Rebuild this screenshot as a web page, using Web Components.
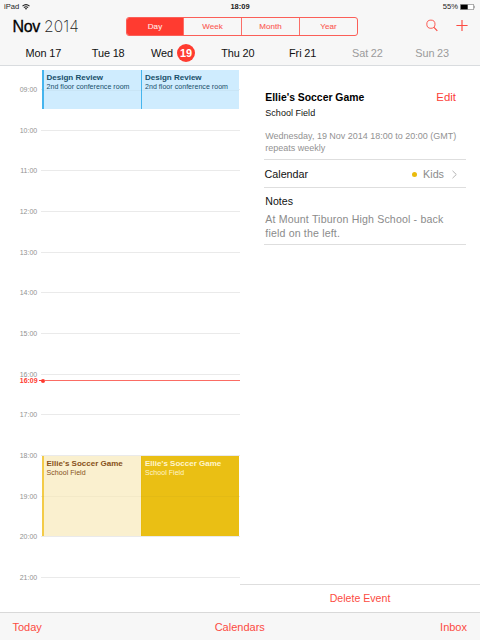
<!DOCTYPE html>
<html lang="en">
<head>
<meta charset="utf-8">
<title>Calendar</title>
<style>
html,body{margin:0;padding:0}
body{width:480px;height:640px;overflow:hidden;background:#fff;color:#111;font-family:"Liberation Sans",Arial,sans-serif}
</style>
</head>
<body>
<calendar-app></calendar-app>
<script>
const define = (name, html, init) => customElements.define(name, class extends HTMLElement {
  constructor() {
    super();
    this.attachShadow({ mode: "open" }).innerHTML = "<style>*{box-sizing:border-box}:host{box-sizing:border-box;white-space:nowrap}</style>" + html;
  }
  connectedCallback() { if (init) init(this, this.shadowRoot); }
});

define("status-bar", `<style>
:host{display:grid;grid-template-columns:1fr 1fr 1fr;align-items:center;height:13px;padding:0 4px 0 4px;font-size:7.6px;line-height:13px;color:#222}
.l,.r{display:flex;align-items:center}.l{gap:3px}.r{justify-content:flex-end;gap:2px}.c{text-align:center;font-weight:bold;font-size:7.5px}
svg{display:block}
</style>
<div class="l"><span>iPad</span><svg width="8" height="6" viewBox="0 0 8 6" fill="none" stroke="#222" stroke-width="1.1"><path d="M.5 2.2Q4-1 7.5 2.2M1.9 3.7Q4 1.8 6.1 3.7"/><path d="M2.8 4.5Q4 3.5 5.2 4.5L4 5.8Z" fill="#222" stroke="none"/></svg></div>
<div class="c">18:09</div>
<div class="r"><span>55%</span><svg width="16" height="6" viewBox="0 0 16 6"><rect x=".3" y=".3" width="13.4" height="5.4" rx=".8" fill="#fff" stroke="#555" stroke-width=".6"/><rect x=".7" y=".7" width="7" height="4.6" fill="#000"/><path d="M14.4 2Q15.6 3 14.4 4Z" fill="#444"/></svg></div>`);

define("segmented-control", `<style>
:host{display:grid;grid-template-columns:56px 58px 58px 58px;width:232px;height:19px;border:1px solid #fb5f58;border-radius:3px;overflow:hidden}
</style><slot></slot>`);
define("segment-item", `<style>
:host{display:flex;align-items:center;justify-content:center;font-size:8px;color:#fb5a52;border-left:1px solid #fb6f68;letter-spacing:.1px;-webkit-text-stroke:.1px}
:host(:first-child){border-left:0}
:host([selected]){background:#ff3b30;color:#ffe9e7}
</style><slot></slot>`);

define("nav-bar", `<style>
:host{display:grid;grid-template-columns:126px 232px 1fr;height:27px;padding-top:4px;align-items:start}
.title{display:flex;gap:4px;padding-left:12.5px;font-size:16px;line-height:19px;color:#000}
b{font-weight:400;-webkit-text-stroke:.3px #000;letter-spacing:-.35px}
i{font:200 15.6px/19px Inter,"Liberation Sans",sans-serif;color:#222;letter-spacing:.1px}
.icons{display:flex;justify-content:flex-end;gap:18px;padding:2px 12px 0 0}
svg{fill:none;stroke:#fc4b42;display:block}
</style>
<div class="title"><b>Nov</b><i>2014</i></div>
<segmented-control><segment-item selected>Day</segment-item><segment-item>Week</segment-item><segment-item>Month</segment-item><segment-item>Year</segment-item></segmented-control>
<div class="icons">
<svg width="12" height="13" viewBox="0 0 12 13"><circle cx="4.9" cy="5.2" r="4.1" stroke-width=".9"/><path d="M8 8.4L11.3 11.8" stroke-width="1.2"/></svg>
<svg width="12" height="13" viewBox="0 0 12 13"><path d="M6 .9V12M.4 6.5H11.6" stroke-width="1.15"/></svg></div>`);

define("week-day", `<style>
:host{display:flex;align-items:center;justify-content:center;gap:2.7px;font-size:10.9px;letter-spacing:-.07px;color:#111}
:host([weekend]){color:#9b9b9b}
.n{display:inline-flex;align-items:center;justify-content:center}
:host([selected]) .n{width:18px;height:18px;border-radius:50%;background:#ff3b30;color:#fff;font-weight:bold}
:host([selected]){gap:4px}
</style><slot></slot><span class="n"></span>`, (el, root) => { root.querySelector(".n").textContent = el.getAttribute("num"); });

define("week-strip", `<style>:host{display:grid;grid-template-columns:repeat(7,64.8px);height:25px;padding:1px 0 0 11px}</style>
<week-day num="17">Mon</week-day><week-day num="18">Tue</week-day><week-day num="19" selected>Wed</week-day><week-day num="20">Thu</week-day><week-day num="21">Fri</week-day><week-day num="22" weekend>Sat</week-day><week-day num="23" weekend>Sun</week-day>`);

define("hour-row", `<style>
:host{display:flex;align-items:center;height:40.65px;gap:4px}
.t{width:37.3px;text-align:right;font-size:7px;color:#929292;letter-spacing:.03px}
.line{flex:1;height:1px;background:#eaeaea}
</style><span class="t"><slot></slot></span><span class="line"></span>`);

define("day-event", `<style>
:host{position:absolute;display:block;width:99px;padding:3px 0 0 4.5px;background:var(--fill);border-left:0;color:var(--ink)}
:host::before{content:"";position:absolute;left:0;top:0;bottom:0;width:1.5px;background:var(--bar)}
.h{font-weight:bold;font-size:8.02px;line-height:9px}
.p{font-size:7.05px;line-height:9.5px;letter-spacing:.03px}
.mid{position:absolute;left:0;right:0;height:1px;top:var(--mid);background:rgba(80,80,40,.04)}
</style><span class="mid"></span><div class="h"><slot></slot></div><div class="p"><slot name="place"></slot></div>`);

define("now-marker", `<style>
:host{position:absolute;left:0;top:310px;width:240px;height:9px;display:flex;align-items:center;color:#ff3b30}
.t{width:37.5px;text-align:right;font-size:7px;font-weight:bold;letter-spacing:-.05px}
.dash{width:3px;height:1px;background:#ff3b30;margin-left:1px}
.dot{width:4px;height:4px;border-radius:50%;background:#ff3b30;margin-left:-.5px}
.line{flex:1;height:1px;background:#fb6c64}
</style><span class="t"><slot></slot></span><span class="dash"></span><span class="dot"></span><span class="line"></span>`);

define("day-timeline", `<style>
:host{display:block;position:relative;width:240px;height:546px;overflow:hidden;padding-top:3.4px}
.blue{--fill:#cfecfe;--bar:#45b5ee;--ink:#174f6b;--mid:19.5px;top:4px;height:39px}
.gold{top:390px;height:80px;--mid:40px}
.pale{--fill:#faf0cf;--bar:#f3cb48;--ink:#875019}
.full{--fill:#eabf14;--bar:#e8bb10;--ink:#fff5cc}
.a{left:42px}.b{left:140.5px;width:98.5px}
</style>
<div class="hours"></div>
<day-event class="blue a">Design Review<span slot="place">2nd floor conference room</span></day-event>
<day-event class="blue b">Design Review<span slot="place">2nd floor conference room</span></day-event>
<day-event class="gold pale a">Ellie's Soccer Game<span slot="place">School Field</span></day-event>
<day-event class="gold full b">Ellie's Soccer Game<span slot="place">School Field</span></day-event>
<now-marker>16:09</now-marker>`, (el, root) => {
  const box = root.querySelector(".hours");
  for (let h = 9; h <= 21; h++) {
    const row = document.createElement("hour-row");
    row.textContent = String(h).padStart(2, "0") + ":00";
    box.append(row);
  }
});

define("event-detail", `<style>
:host{display:flex;flex-direction:column;width:240px;height:546px;color:#111}
section{margin:0 14px 0 24px;padding-left:1.3px;border-bottom:1px solid #dedede}
.info{height:94px;padding-top:23px}
.head{display:flex;justify-content:space-between;align-items:center;height:16px;padding-right:10px}
.head b{font-size:10.4px;color:#000}.head span{font-size:11.4px;color:#fc4038}
.place{font-size:9px;line-height:12px;margin-top:2px;letter-spacing:.03px}
.when{font-size:9px;line-height:12px;margin-top:11px;color:#929292;letter-spacing:-.01px}
.cal{height:28px;display:flex;align-items:center;font-size:10.75px;padding:1px 9px 0 .5px}
.cal .dot{width:5px;height:5px;border-radius:50%;background:#eabb0c;margin:0 6px 0 auto}
.cal .v{color:#8b8b8b}.cal svg{margin-left:8px}
.notes{height:57px;padding-top:7px;font-size:10.6px;line-height:13.5px}
.notes p{margin:4.5px 0 0;color:#8b8b8b;letter-spacing:.16px}
.delete{margin-top:auto;height:28px;padding-bottom:1px;border-top:1px solid #dedede;display:flex;align-items:center;justify-content:center;font-size:10.6px;color:#fc4b42}
</style>
<section class="info"><div class="head"><b>Ellie's Soccer Game</b><span>Edit</span></div>
<div class="place">School Field</div><div class="when">Wednesday, 19 Nov 2014 18:00 to 20:00 (GMT)<br>repeats weekly</div></section>
<section class="cal"><span>Calendar</span><i class="dot"></i><span class="v">Kids</span><svg width="5" height="9" viewBox="0 0 5 9" fill="none" stroke="#b5b5b5" stroke-width="1"><path d="M.5.8L4.3 4.5L.5 8.2"/></svg></section>
<section class="notes"><div>Notes</div><p>At Mount Tiburon High School - back<br>field on the left.</p></section>
<div class="delete">Delete Event</div>`);

define("tool-bar", `<style>
:host{display:flex;justify-content:space-between;align-items:center;height:28px;padding:0 13px 0 12.5px;border-top:1px solid #d9d9d9;background:#f7f7f7;color:#fc4b42;font-size:11px}
span{flex:1}
.mid{text-align:center}.end{text-align:right}
</style><span>Today</span><span class="mid">Calendars</span><span class="end">Inbox</span>`);

define("calendar-app", `<style>
:host{display:flex;flex-direction:column;width:480px;height:640px}
header{height:66px;background:#f7f7f7;border-bottom:1px solid #d9dcdf}
main{display:flex;height:546px}
</style><header><status-bar></status-bar><nav-bar></nav-bar><week-strip></week-strip></header>
<main><day-timeline></day-timeline><event-detail></event-detail></main><tool-bar></tool-bar>`);
</script>
</body>
</html>
